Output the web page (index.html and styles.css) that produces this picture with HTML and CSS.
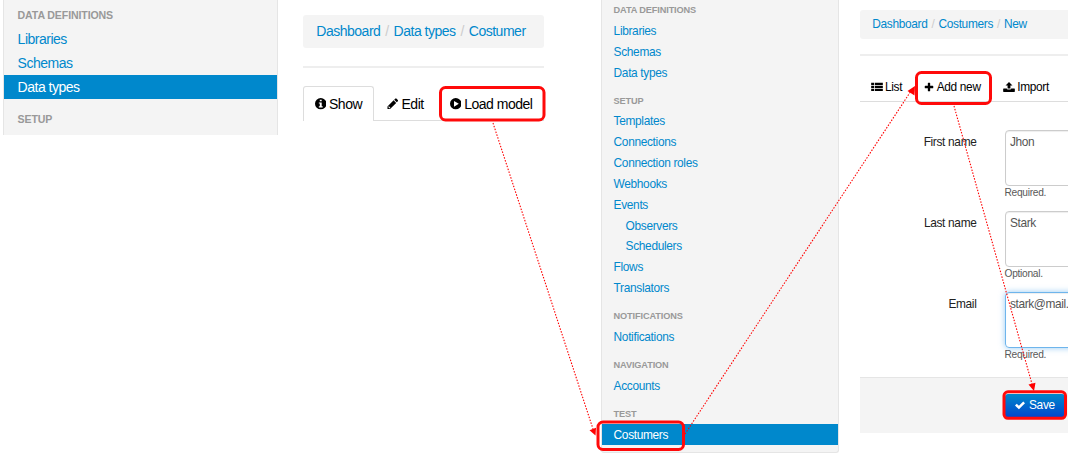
FILE: index.html
```html
<!DOCTYPE html>
<html lang="en">
<head>
<meta charset="utf-8">
<title>Load model walkthrough</title>
<link rel="stylesheet" href="styles.css">
</head>
<body>
<svg class="sprite" aria-hidden="true">
  <symbol id="info" viewBox="0 0 12 12"><path fill-rule="evenodd" d="M6 0a6 6 0 1 1 0 12A6 6 0 0 1 6 0ZM5 1.9v1.6h2V1.9ZM4 4.6v1.2h1v2.9H4V10h4V8.700H7V4.600Z"/></symbol>
  <symbol id="pencil" viewBox="0 0 12 12"><path fill-rule="evenodd" d="M8.600.7Q9.300 0 10 .7l1.300 1.300q.7.7 0 1.400L10.200 4.500 7.500 1.800ZM6.900 2.400l2.700 2.700-6.400 6.400H.5V8.800ZM1.400 9.200v.7h.8v.8h.7l.6-.6-1.500-1.500Z"/></symbol>
  <symbol id="play" viewBox="0 0 12 12"><path fill-rule="evenodd" d="M6 0a6 6 0 1 1 0 12A6 6 0 0 1 6 0ZM4.200 3v6L9.200 6Z"/></symbol>
  <symbol id="list" viewBox="0 0 14 12"><path d="M0 .8h3.700v2.700H0ZM4.600.8H14v2.700H4.600ZM0 4.500h3.700v2.700H0ZM4.600 4.500H14v2.700H4.600ZM0 8.200h3.700v2.700H0ZM4.600 8.200H14v2.700H4.600Z"/></symbol>
  <symbol id="plus" viewBox="0 0 12 12"><path d="M5.200 1h1.600q.6 0 .6.600v3H10.400q.7 0 .7.600v1.600q0 .6-.7.600h-3v3q0 .6-.6.600H5.200q-.6 0-.6-.6v-3h-3q-.7 0-.7-.6V5.200q0-.6.7-.6h3v-3q0-.6.600-.6Z"/></symbol>
  <symbol id="upload" viewBox="0 0 14 12"><path d="M7 0l4.200 4.300H8.700v3.500H5.300V4.300H2.800ZM.6 7.700h3.700q.3 1.200 1.300 1.200h2.800q1 0 1.300-1.200h3.700q.6 0 .6.600v2.900q0 .7-.6.700H.6q-.6 0-.6-.7V8.300q0-.6.600-.6Z"/></symbol>
  <symbol id="check" viewBox="0 0 12 12"><path d="M0 6.500 2.100 4.400 4.700 7 9.900 1.800 12 3.900 4.700 11.200Z"/></symbol>
</svg>
<div class="stage">
  <nav class="sidebar sidebar-types">
    <h3 class="nav-header">DATA DEFINITIONS</h3>
    <a class="nav-link">Libraries</a>
    <a class="nav-link">Schemas</a>
    <a class="nav-link active">Data types</a>
    <h3 class="nav-header">SETUP</h3>
  </nav>

  <main class="model">
    <div class="breadcrumb"><a>Dashboard</a><i>/</i><a>Data types</a><i>/</i><a>Costumer</a></div>
    <div class="rule"></div>
    <div class="tabs">
      <a class="tab current"><svg class="icon"><use href="#info"/></svg>Show</a>
      <a class="tab"><svg class="icon"><use href="#pencil"/></svg>Edit</a>
      <a class="tab"><svg class="icon"><use href="#play"/></svg>Load model</a>
    </div>
  </main>

  <nav class="sidebar sidebar-full">
    <h3 class="nav-header">DATA DEFINITIONS</h3>
    <a class="nav-link">Libraries</a>
    <a class="nav-link">Schemas</a>
    <a class="nav-link">Data types</a>
    <h3 class="nav-header">SETUP</h3>
    <a class="nav-link">Templates</a>
    <a class="nav-link">Connections</a>
    <a class="nav-link">Connection roles</a>
    <a class="nav-link">Webhooks</a>
    <a class="nav-link">Events</a>
    <a class="nav-link nested">Observers</a>
    <a class="nav-link nested">Schedulers</a>
    <a class="nav-link">Flows</a>
    <a class="nav-link">Translators</a>
    <h3 class="nav-header">NOTIFICATIONS</h3>
    <a class="nav-link">Notifications</a>
    <h3 class="nav-header">NAVIGATION</h3>
    <a class="nav-link">Accounts</a>
    <h3 class="nav-header">TEST</h3>
    <a class="nav-link active">Costumers</a>
  </nav>

  <section class="record">
    <div class="breadcrumb"><a>Dashboard</a><i>/</i><a>Costumers</a><i>/</i><a>New</a></div>
    <div class="rule"></div>
    <div class="tabs">
      <a class="tab"><svg class="icon wide"><use href="#list"/></svg>List</a>
      <a class="tab"><svg class="icon"><use href="#plus"/></svg>Add new</a>
      <a class="tab"><svg class="icon wide"><use href="#upload"/></svg>Import</a>
    </div>
    <div class="field"><label>First name</label><div><div class="input">Jhon</div><p class="help">Required.</p></div></div>
    <div class="field"><label>Last name</label><div><div class="input">Stark</div><p class="help">Optional.</p></div></div>
    <div class="field"><label>Email</label><div><div class="input focused">stark@mail.</div><p class="help">Required.</p></div></div>
    <div class="actions"><div class="save"><svg class="icon"><use href="#check"/></svg>Save</div></div>
  </section>

  <svg class="callouts" viewBox="0 0 1068 457">
    <g class="frames">
      <rect x="440.500" y="87.500" width="103.500" height="32.500" rx="5"/>
      <rect x="598" y="422" width="85.500" height="27.500" rx="5"/>
      <rect x="916.500" y="72.500" width="74" height="31" rx="5"/>
      <rect x="1004" y="391.800" width="61.500" height="26.500" rx="4"/>
    </g>
    <g class="routes">
      <path d="M493 123 593 429"/>
      <path d="M685 434 911 91"/>
      <path d="M954 106 1032 384"/>
    </g>
    <g class="heads">
      <path d="M595.500 435.500 589.500 430.300 596 427.800Z"/>
      <path d="M915 86 914.500 95.500 907.500 91Z"/>
      <path d="M1034 391 1028.500 384.600 1035.500 382.800Z"/>
    </g>
  </svg>
</div>
</body>
</html>
```
FILE: styles.css
```css
* { box-sizing: border-box; }
body {
  margin: 0;
  background: #fff;
  color: #000;
  font-family: "Liberation Sans", Arial, sans-serif;
}
.sprite { display: none; }
.stage {
  position: relative;
  display: flex;
  align-items: flex-start;
  width: 1068px;
  height: 457px;
  overflow: hidden;
}

/* Sidebars */
.sidebar {
  flex: none;
  background: #f4f4f4;
  border: solid #e5e5e5;
  border-width: 0 1px;
}
.nav-header, .nav-link {
  display: block;
  margin: 0;
  height: var(--row);
  line-height: calc(var(--row) + 2px);
  padding-left: var(--inset);
  white-space: nowrap;
}
.nav-header { color: #999; font-weight: bold; }
.nav-link { color: #0088cc; }
.nav-link + .nav-header { margin-top: var(--gap); }
.active { background: #0088cc; color: #fff; }
.sidebar-types {
  --row: 24px;
  --gap: 8px;
  --inset: 13.600px;
  width: 275px;
  height: 135px;
  margin-left: 3px;
  padding-top: 3px;
  overflow: hidden;
  font-size: 14px;
  letter-spacing: -0.490px;
}
.sidebar-types .nav-header, .sidebar-types .nav-link { line-height: var(--row); }
.sidebar-types .nav-header { font-size: 10.600px; letter-spacing: -0.130px; }
.sidebar-full {
  --row: 20.850px;
  --gap: 7.200px;
  --inset: 11.600px;
  width: 238px;
  height: 454px;
  margin: -1px 0 0 57px;
  border-bottom-width: 1px;
  border-radius: 0 0 3px 3px;
  font-size: 11.900px;
  letter-spacing: -0.330px;
}
.sidebar-full .nav-header { font-size: 9.200px; letter-spacing: -0.130px; }
.sidebar-full .nested { padding-left: 23.600px; }

/* Shared content pieces */
.breadcrumb {
  display: flex;
  background: #f4f4f4;
  border-radius: 3px;
  color: #0088cc;
  white-space: nowrap;
}
.breadcrumb i { color: #ccc; font-style: normal; }
.rule { background: #eee; }
.tabs {
  display: flex;
  border-bottom: 1px solid #ddd;
  white-space: nowrap;
}
.tab { display: flex; align-items: center; }
.icon { flex: none; width: 11.500px; height: 11.500px; fill: currentColor; }

/* Model page */
.model { flex: none; width: 241px; margin: 15px 0 0 25px; font-size: 14px; letter-spacing: -0.490px; }
.model .breadcrumb { height: 33px; line-height: 33px; padding-left: 13.300px; }
.model .breadcrumb i { padding: 0 4.900px; }
.model .rule { height: 1.500px; margin-top: 18px; }
.model .tabs { height: 35px; margin-top: 18.500px; }
.model .tab { height: 35px; padding: 0 12px 0 12px; border: 1px solid transparent; border-bottom: 0; }
.model .tab.current {
  width: 71px;
  padding-left: 10.500px;
  background: #fff;
  border-color: #ddd;
  border-radius: 3px 3px 0 0;
}
.model .icon { margin-right: 3px; }

/* New record page */
.record { flex: none; width: 208px; margin: 10px 0 0 21px; font-size: 11.900px; letter-spacing: -0.330px; overflow: hidden; }
.record .breadcrumb { height: 28.500px; line-height: 28.500px; padding-left: 12.300px; border-radius: 3px 0 0 3px; }
.record .breadcrumb i { padding: 0 4px; }
.record .rule { height: 1.500px; margin-top: 15.500px; }
.record .tabs { height: 30px; margin-top: 16.500px; padding-left: 10.500px; gap: 22px; }
.record .icon { width: 10px; height: 10px; margin-right: 2.500px; }
.record .icon.wide { width: 12px; }
.field { display: flex; height: 81px; color: #222; }
.tabs + .field { margin-top: 28px; }
.field label { flex: none; width: 116.500px; margin-right: 28px; padding-top: 6px; line-height: 13px; text-align: right; white-space: nowrap; }
.input {
  width: 180px;
  height: 56px;
  padding: 4px 4.500px;
  line-height: 14px;
  color: #555;
  letter-spacing: -0.400px;
  border: 1px solid #ccc;
  border-radius: 4px;
  box-shadow: inset 0 1px 1px rgba(0, 0, 0, .07);
}
.input.focused { border-color: #6eb5ec; box-shadow: inset 0 1px 1px rgba(0, 0, 0, .07), 0 0 6px rgba(82, 168, 236, .6); }
.help { margin: 0; font-size: 10.200px; letter-spacing: -0.280px; line-height: 13px; color: #595959; }
.actions { height: 56px; margin-top: 4px; padding: 15.500px 0 0 144.500px; background: #f4f4f4; border-top: 1px solid #e5e5e5; }
.save {
  display: flex;
  align-items: center;
  width: 60px;
  height: 24px;
  padding: 0 0 2px 10.500px;
  color: #fff;
  border-radius: 3px;
  background: linear-gradient(#0088cc, #0044cc);
}
.save .icon { margin-right: 4px; }

/* Step highlights drawn over the pages */
.callouts { position: absolute; left: 0; top: 0; width: 1068px; height: 457px; }
.frames { fill: none; stroke: #ff0a0a; stroke-width: 3; }
.routes { fill: none; stroke: #ff0000; stroke-width: 1.100; stroke-dasharray: 1.500 1.500; }
.heads { fill: #ff0000; }
```
